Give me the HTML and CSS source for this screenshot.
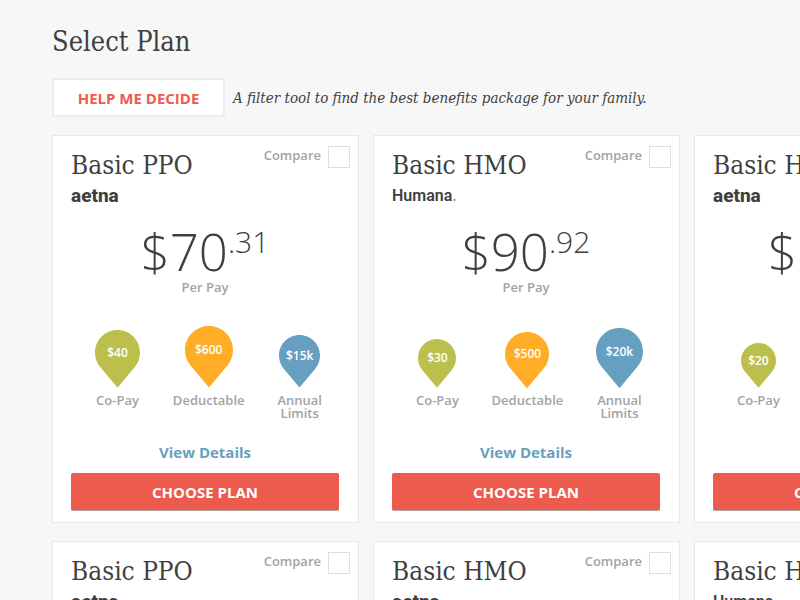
FILE: index.html
```html
<!DOCTYPE html>
<html lang="en">
<head>
<meta charset="utf-8">
<meta name="viewport" content="width=device-width, initial-scale=1">
<title>Select Plan</title>
<link rel="stylesheet" href="styles.css">
</head>
<body>
<svg class="defs" width="0" height="0" aria-hidden="true">
  <symbol id="pin" viewBox="0 0 78 100"><path d="M39 100 L9 64 C3 57 0 48 0 39 C0 17.500 17.500 0 39 0 C60.500 0 78 17.500 78 39 C78 48 75 57 69 64 Z"/></symbol>
</svg>
<main class="page">
  <h1 class="page-title">Select Plan</h1>
  <div class="helper">
    <button class="help-button" type="button">HELP ME DECIDE</button>
    <p class="helper-text">A filter tool to find the best benefits package for your family.</p>
  </div>

  <div class="plans">
    <article class="plan">
      <header class="plan-head">
        <div>
          <h2 class="plan-name">Basic PPO</h2>
          <p class="brand brand-aetna">aetna</p>
        </div>
        <label class="compare">Compare <input type="checkbox"></label>
      </header>
      <div class="plan-body">
        <p class="price">$70<span class="cents">.31</span></p>
        <p class="period">Per Pay</p>
        <ul class="facts">
          <li class="fact"><div class="pin pin-green" style="--pin:45px"><svg><use href="#pin"/></svg><span>$40</span></div><p>Co-Pay</p></li>
          <li class="fact"><div class="pin pin-orange" style="--pin:48px"><svg><use href="#pin"/></svg><span>$600</span></div><p>Deductable</p></li>
          <li class="fact"><div class="pin pin-blue" style="--pin:41px"><svg><use href="#pin"/></svg><span>$15k</span></div><p>Annual<br>Limits</p></li>
        </ul>
        <a class="details" href="#">View Details</a>
        <button class="choose" type="button">CHOOSE PLAN</button>
      </div>
    </article>

    <article class="plan">
      <header class="plan-head">
        <div>
          <h2 class="plan-name">Basic HMO</h2>
          <p class="brand brand-humana">Humana<span class="mark">.</span></p>
        </div>
        <label class="compare">Compare <input type="checkbox"></label>
      </header>
      <div class="plan-body">
        <p class="price">$90<span class="cents">.92</span></p>
        <p class="period">Per Pay</p>
        <ul class="facts">
          <li class="fact"><div class="pin pin-green" style="--pin:38px"><svg><use href="#pin"/></svg><span>$30</span></div><p>Co-Pay</p></li>
          <li class="fact"><div class="pin pin-orange" style="--pin:44px"><svg><use href="#pin"/></svg><span>$500</span></div><p>Deductable</p></li>
          <li class="fact"><div class="pin pin-blue" style="--pin:47px"><svg><use href="#pin"/></svg><span>$20k</span></div><p>Annual<br>Limits</p></li>
        </ul>
        <a class="details" href="#">View Details</a>
        <button class="choose" type="button">CHOOSE PLAN</button>
      </div>
    </article>

    <article class="plan">
      <header class="plan-head">
        <div>
          <h2 class="plan-name">Basic HMO</h2>
          <p class="brand brand-aetna">aetna</p>
        </div>
        <label class="compare">Compare <input type="checkbox"></label>
      </header>
      <div class="plan-body">
        <p class="price">$110<span class="cents">.45</span></p>
        <p class="period">Per Pay</p>
        <ul class="facts">
          <li class="fact"><div class="pin pin-green" style="--pin:35px"><svg><use href="#pin"/></svg><span>$20</span></div><p>Co-Pay</p></li>
          <li class="fact"><div class="pin pin-orange" style="--pin:41px"><svg><use href="#pin"/></svg><span>$400</span></div><p>Deductable</p></li>
          <li class="fact"><div class="pin pin-blue" style="--pin:48px"><svg><use href="#pin"/></svg><span>$25k</span></div><p>Annual<br>Limits</p></li>
        </ul>
        <a class="details" href="#">View Details</a>
        <button class="choose" type="button">CHOOSE PLAN</button>
      </div>
    </article>

    <article class="plan">
      <header class="plan-head">
        <div>
          <h2 class="plan-name">Basic PPO</h2>
          <p class="brand brand-aetna">aetna</p>
        </div>
        <label class="compare">Compare <input type="checkbox"></label>
      </header>
    </article>

    <article class="plan">
      <header class="plan-head">
        <div>
          <h2 class="plan-name">Basic HMO</h2>
          <p class="brand brand-aetna">aetna</p>
        </div>
        <label class="compare">Compare <input type="checkbox"></label>
      </header>
    </article>

    <article class="plan">
      <header class="plan-head">
        <div>
          <h2 class="plan-name">Basic HMO</h2>
          <p class="brand brand-humana">Humana<span class="mark">.</span></p>
        </div>
        <label class="compare">Compare <input type="checkbox"></label>
      </header>
    </article>
  </div>
</main>
</body>
</html>
```
FILE: styles.css
```css
* { box-sizing: border-box; }

body {
  margin: 0;
  overflow-x: hidden;
  background: #f7f7f7;
  color: #3f3f3f;
  font-family: "Open Sans", "Noto Sans", sans-serif;
}

h1, h2, p, ul { margin: 0; padding: 0; }
h1, h2 { font-weight: 400; }
ul { list-style: none; }
button { font-family: inherit; cursor: pointer; }
.defs { position: absolute; }

.page { padding: 24px 52px 18px; }

.page-title,
.plan-name,
.helper-text {
  font-family: "DejaVu Serif Condensed", "DejaVu Serif", serif;
}

.page-title { font-size: 27px; line-height: 36px; }

.helper {
  display: flex;
  align-items: center;
  gap: 8px;
  margin: 18px 0;
}

.help-button {
  width: 173px;
  height: 39px;
  border: 2px solid #ececec;
  border-radius: 2px;
  background: #fff;
  color: #f05a4e;
  font-size: 15px;
  font-weight: 700;
}

.helper-text { font-size: 15px; font-style: italic; white-space: nowrap; }

.plans {
  display: grid;
  grid-template-columns: repeat(3, minmax(307px, 1fr));
  gap: 18px 14px;
}

.plan {
  min-height: 388px;
  border: 1px solid #e8e8e8;
  background: #fff;
}

.plan-head {
  display: flex;
  justify-content: space-between;
  padding: 10px 8px 0 18px;
}

.plan-name { font-size: 26px; line-height: 38px; white-space: nowrap; }

.brand { line-height: 24px; font-family: "Roboto", sans-serif; }
.brand-aetna { font-size: 19px; font-weight: 800; }
.brand-humana { font-size: 16px; font-weight: 600; }
.mark { color: #a3a3a3; }

.compare {
  display: flex;
  gap: 7px;
  color: #a3a3a3;
  font-size: 13px;
  font-weight: 600;
  line-height: 18px;
}

.compare input {
  appearance: none;
  width: 22px;
  height: 22px;
  margin: 0;
  border: 1px solid #dedede;
  background: #fff;
}

.plan-body { padding: 16px 19px 11px 18px; text-align: center; }

.price {
  display: flex;
  justify-content: center;
  height: 54px;
  font-size: 51px;
  font-weight: 300;
  line-height: 54px;
}
.cents { font-size: 30px; line-height: 36px; }

.period,
.fact { color: #a3a3a3; font-size: 13px; font-weight: 600; }

.period { line-height: 18px; }

.facts {
  display: flex;
  justify-content: space-between;
  align-items: flex-start;
  margin-top: 31px;
  padding: 0 17px 0 24px;
}

.fact {
  display: flex;
  flex-direction: column;
  align-items: center;
  line-height: 13px;
}

.pin {
  display: grid;
  align-content: end;
  justify-items: center;
  height: 61px;
  margin-bottom: 6px;
}

.pin svg,
.pin span { grid-area: 1 / 1; }
.pin svg { width: var(--pin); height: calc(var(--pin) * 100 / 78); }
.pin span { color: #fff; font-size: 12px; line-height: var(--pin); }
.pin-green { fill: #bcbf4c; }
.pin-orange { fill: #ffac26; }
.pin-blue { fill: #679fc0; }

.details {
  display: block;
  margin: 22px 0 11px;
  color: #679fc0;
  font-size: 15px;
  font-weight: 700;
  line-height: 20px;
  text-decoration: none;
}

.choose {
  display: block;
  width: 100%;
  height: 38px;
  border: 0;
  border-bottom: 1px solid #b3a3a1;
  border-radius: 2px;
  background: #ed5a4e;
  color: #fff;
  font-size: 15px;
  font-weight: 700;
}
```
